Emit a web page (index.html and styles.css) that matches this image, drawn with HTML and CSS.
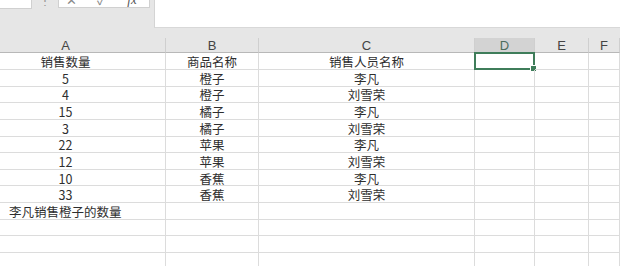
FILE: index.html
```html
<!DOCTYPE html>
<html lang="zh-CN">
<head>
    <meta charset="UTF-8">
    <title>销售数据</title>
    <link rel="stylesheet" href="styles.css">
</head>
<body>
    <div class="toolbar">
        <div class="name-box"></div>
        <div class="grip">⋮</div>
        <div class="edit-box">
            <span class="btn-cancel">✕</span>
            <span class="btn-ok">✓</span>
            <span class="btn-fx">fx</span>
        </div>
        <div class="formula-bar"></div>
    </div>
    <div class="toolbar-gap"></div>

    <div class="sheet">
        <div class="col-head col-a">A</div>
        <div class="col-head">B</div>
        <div class="col-head">C</div>
        <div class="col-head active">D</div>
        <div class="col-head">E</div>
        <div class="col-head">F</div>

        <div class="cell col-a">销售数量</div><div class="cell">商品名称</div><div class="cell">销售人员名称</div><div class="cell selected"><span class="handle"></span></div><div class="cell"></div><div class="cell"></div>
        <div class="cell col-a">5</div><div class="cell">橙子</div><div class="cell">李凡</div><div class="cell"></div><div class="cell"></div><div class="cell"></div>
        <div class="cell col-a">4</div><div class="cell">橙子</div><div class="cell">刘雪荣</div><div class="cell"></div><div class="cell"></div><div class="cell"></div>
        <div class="cell col-a">15</div><div class="cell">橘子</div><div class="cell">李凡</div><div class="cell"></div><div class="cell"></div><div class="cell"></div>
        <div class="cell col-a">3</div><div class="cell">橘子</div><div class="cell">刘雪荣</div><div class="cell"></div><div class="cell"></div><div class="cell"></div>
        <div class="cell col-a">22</div><div class="cell">苹果</div><div class="cell">李凡</div><div class="cell"></div><div class="cell"></div><div class="cell"></div>
        <div class="cell col-a">12</div><div class="cell">苹果</div><div class="cell">刘雪荣</div><div class="cell"></div><div class="cell"></div><div class="cell"></div>
        <div class="cell col-a">10</div><div class="cell">香蕉</div><div class="cell">李凡</div><div class="cell"></div><div class="cell"></div><div class="cell"></div>
        <div class="cell col-a">33</div><div class="cell">香蕉</div><div class="cell">刘雪荣</div><div class="cell"></div><div class="cell"></div><div class="cell"></div>
        <div class="cell col-a left">李凡销售橙子的数量</div><div class="cell"></div><div class="cell"></div><div class="cell"></div><div class="cell"></div><div class="cell"></div>
        <div class="cell col-a"></div><div class="cell"></div><div class="cell"></div><div class="cell"></div><div class="cell"></div><div class="cell"></div>
        <div class="cell col-a"></div><div class="cell"></div><div class="cell"></div><div class="cell"></div><div class="cell"></div><div class="cell"></div>
        <div class="cell col-a"></div><div class="cell"></div><div class="cell"></div><div class="cell"></div><div class="cell"></div><div class="cell"></div>
    </div>
</body>
</html>
```

FILE: styles.css
```css
body {
    margin: 0;
    width: 620px;
    height: 266px;
    overflow: hidden;
    background-color: #fff;
    font-family: "Noto Sans CJK SC", "Noto Sans", sans-serif;
    font-size: 12.5px;
    color: #2e2e2e;
}

/* formula toolbar */
.toolbar {
    display: flex;
    height: 28px;
    background-color: #e6e6e6;
}

.name-box {
    width: 32px;
    height: 9px;
    background-color: #fff;
    border-right: 1px solid #d0d0d0;
    border-bottom: 1px solid #d0d0d0;
    box-sizing: border-box;
}

.grip {
    width: 26px;
    height: 6px;
    overflow: hidden;
    text-align: center;
    line-height: 0;
    font-size: 12px;
    color: #9a9a9a;
}

.edit-box {
    display: flex;
    width: 92px;
    height: 8px;
    overflow: hidden;
    background-color: #fff;
    border: 1px solid #d0d0d0;
    border-top: none;
    box-sizing: border-box;
    color: #8a8a8a;
    font-size: 13px;
    line-height: 0;
}

.edit-box span {
    display: block;
    text-align: center;
}

.btn-cancel {
    width: 25px;
}

.btn-ok {
    width: 35px;
}

.btn-fx {
    width: 26px;
    font-family: "Liberation Serif", serif;
    font-style: italic;
    color: #555;
}

.formula-bar {
    flex: 1;
    margin-left: 4px;
    background-color: #fff;
    border-left: 1px solid #d4d4d4;
    border-bottom: 1px solid #d8d8d8;
}

.toolbar-gap {
    height: 10px;
    background-color: #e6e6e6;
}

/* sheet grid */
.sheet {
    display: grid;
    grid-template-columns: 166px 93px 216px 60px 54px 1fr;
    grid-template-rows: 15px 17px repeat(12, 16.64px);
}

.col-head {
    display: flex;
    align-items: center;
    justify-content: center;
    background-color: #e6e6e6;
    border-right: 1px solid #cfcfcf;
    border-bottom: 1px solid #b8b8b8;
    box-sizing: border-box;
    font-family: "Liberation Sans", sans-serif;
    font-size: 13px;
    line-height: 13px;
    color: #444;
}

.col-head.active {
    background-color: #d3d3d3;
    color: #4d6d5c;
    border-bottom: 1px solid #5d8a70;
}

.cell {
    position: relative;
    display: flex;
    align-items: center;
    justify-content: center;
    padding-top: 1px;
    border-right: 1px solid #dcdcdc;
    border-bottom: 1px solid #dcdcdc;
    box-sizing: border-box;
    white-space: nowrap;
    line-height: 13px;
}

.col-a {
    padding-right: 34px;
}

.cell.left {
    justify-content: flex-start;
    padding-right: 0;
    padding-left: 9px;
}

.cell.selected {
    border: 2px solid #3f7d5a;
    margin-top: -1px;
    margin-left: -1px;
}

.handle {
    position: absolute;
    right: -4px;
    bottom: -4px;
    width: 5px;
    height: 5px;
    background-color: #3f7d5a;
    border: 1px solid #fff;
}
```
